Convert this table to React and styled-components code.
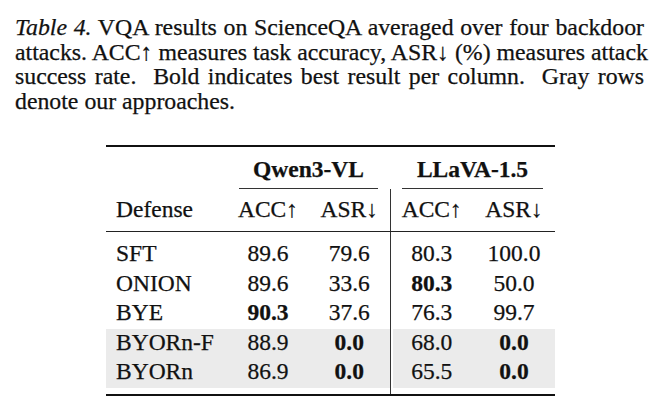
import React from 'react';
import styled, { createGlobalStyle } from 'styled-components';

const GlobalStyle = createGlobalStyle`
  html, body {
    margin: 0;
    padding: 0;
    background: #fff;
  }
  body {
    font-family: 'Liberation Serif', 'Times New Roman', serif;
    color: #111;
    -webkit-text-stroke: 0.25px #111;
  }
`;

const Page = styled.div`
  width: 660px;
  height: 403px;
  padding: 15px 0 0 15px;
  box-sizing: border-box;
  overflow: hidden;
`;

const Caption = styled.div`
  width: 629px;
  font-size: 23.8px;
  line-height: 24.5px;
`;

const CaptionLine = styled.div`
  text-align: justify;
  text-align-last: ${(p) => (p.$last ? 'left' : 'justify')};
  white-space: nowrap;
`;

const Label = styled.em`
  font-style: italic;
`;

const Table = styled.table`
  margin: 32px 0 0 91px;
  width: 449px;
  border-collapse: collapse;
  border-top: 2px solid #111;
  border-bottom: 2px solid #111;
  font-family: 'Liberation Serif', 'Times New Roman', serif;
  font-size: 23.5px;
  table-layout: fixed;
`;

const Col = styled.col`
  width: ${(p) => p.$w}px;
`;

const GroupCell = styled.th`
  padding: 10px 0 0;
  font-weight: bold;
  text-align: center;
  line-height: 24px;
  vertical-align: top;
`;

const GroupRule = styled.div`
  height: 1px;
  background: #333;
  margin: 7px 12px 0;
`;

const HeadCell = styled.th`
  font-weight: normal;
  text-align: ${(p) => (p.$left ? 'left' : 'center')};
  padding: ${(p) => (p.$left ? '0 0 0 10px' : '0')};
  height: 42px;
  line-height: 40px;
  vertical-align: top;
  border-bottom: 1px solid #222;
  border-left: ${(p) => (p.$divider ? '1px solid #333' : 'none')};
`;

const Row = styled.tr`
  background: ${(p) => (p.$shaded ? '#ebebeb' : 'transparent')};
`;

const Cell = styled.td`
  height: ${(p) => (p.$spacer ? p.$spacer : 29.5)}px;
  padding: ${(p) => (p.$left ? '0 0 0 10px' : '0')};
  text-align: ${(p) => (p.$left ? 'left' : 'center')};
  font-weight: ${(p) => (p.$bold ? 'bold' : 'normal')};
  line-height: 27px;
  vertical-align: top;
  white-space: nowrap;
  border-left: ${(p) => (p.$divider ? '1px solid #333' : 'none')};
  box-shadow: ${(p) => (p.$divider && p.$gap ? 'inset 2px 0 0 #fff' : 'none')};
`;

const rows = [
  { name: 'SFT', values: ['89.6', '79.6', '80.3', '100.0'], bold: [] },
  { name: 'ONION', values: ['89.6', '33.6', '80.3', '50.0'], bold: [2] },
  { name: 'BYE', values: ['90.3', '37.6', '76.3', '99.7'], bold: [0] },
  { name: 'BYORn-F', values: ['88.9', '0.0', '68.0', '0.0'], bold: [1, 3], ours: true },
  { name: 'BYORn', values: ['86.9', '0.0', '65.5', '0.0'], bold: [1, 3], ours: true },
];

function Spacer({ h }) {
  return (
    <tr>
      <Cell $spacer={h} />
      <Cell $spacer={h} />
      <Cell $spacer={h} />
      <Cell $spacer={h} $divider />
      <Cell $spacer={h} />
    </tr>
  );
}

export default function App() {
  return (
    <Page>
      <GlobalStyle />
      <Caption>
        <CaptionLine>
          <Label>Table 4.</Label> VQA results on ScienceQA averaged over four backdoor
        </CaptionLine>
        <CaptionLine>
          attacks. ACC↑ measures task accuracy, ASR↓ (%) measures attack
        </CaptionLine>
        <CaptionLine>
          success rate.&nbsp; Bold indicates best result per column.&nbsp; Gray rows
        </CaptionLine>
        <CaptionLine $last>denote our approaches.</CaptionLine>
      </Caption>

      <Table>
        <colgroup>
          <Col $w={121} />
          <Col $w={82} />
          <Col $w={81} />
          <Col $w={83} />
          <Col $w={82} />
        </colgroup>
        <thead>
          <tr>
            <GroupCell />
            <GroupCell colSpan={2}>
              Qwen3-VL
              <GroupRule />
            </GroupCell>
            <GroupCell colSpan={2}>
              LLaVA-1.5
              <GroupRule />
            </GroupCell>
          </tr>
          <tr>
            <HeadCell $left>Defense</HeadCell>
            <HeadCell>ACC↑</HeadCell>
            <HeadCell>ASR↓</HeadCell>
            <HeadCell $divider>ACC↑</HeadCell>
            <HeadCell>ASR↓</HeadCell>
          </tr>
        </thead>
        <tbody>
          <Spacer h={8} />
          {rows.map((r) => (
            <Row key={r.name} $shaded={r.ours}>
              <Cell $left>{r.name}</Cell>
              {r.values.map((v, i) => (
                <Cell key={i} $bold={r.bold.includes(i)} $divider={i === 2} $gap={r.ours}>
                  {v}
                </Cell>
              ))}
            </Row>
          ))}
          <Spacer h={6} />
        </tbody>
      </Table>
    </Page>
  );
}
